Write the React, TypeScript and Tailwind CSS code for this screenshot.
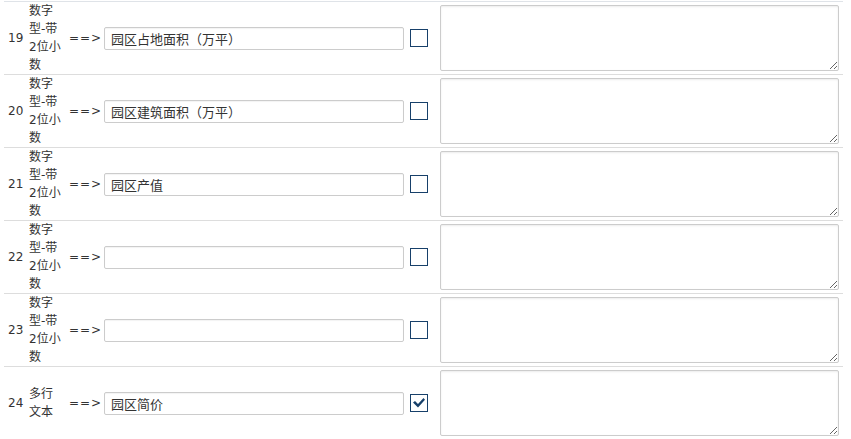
import React from "react";

type Field = {
  no: number;
  type: string;
  name: string;
  checked: boolean;
};

const fields: Field[] = [
  { no: 19, type: "数字型-带2位小数", name: "园区占地面积（万平）", checked: false },
  { no: 20, type: "数字型-带2位小数", name: "园区建筑面积（万平）", checked: false },
  { no: 21, type: "数字型-带2位小数", name: "园区产值", checked: false },
  { no: 22, type: "数字型-带2位小数", name: "", checked: false },
  { no: 23, type: "数字型-带2位小数", name: "", checked: false },
  { no: 24, type: "多行文本", name: "园区简价", checked: true },
];

function Check({ checked }: { checked: boolean }) {
  return (
    <span className="flex h-[18px] w-[18px] items-center justify-center border-[1.5px] border-[#17406a] bg-white">
      {checked && (
        <svg width="14" height="12" viewBox="0 0 14 12">
          <path d="M1 5.5 L3 4 L6 7 L11.5 1 L13 2.8 L6 10.5 Z" fill="#17406a" />
        </svg>
      )}
    </span>
  );
}

export default function App() {
  return (
    <div
      className="min-h-[439px] w-[851px] bg-white pt-px text-[#333]"
      style={{ fontFamily: '"DejaVu Sans", "Noto Sans CJK SC", sans-serif' }}
    >
      <div className="ml-[4px] w-[839px] border-t border-[#dfe3e8]">
        {fields.map((f) => (
          <div key={f.no} className="flex h-[73px] items-center border-b border-[#ddd]">
            <div className="w-[25px] pl-[4px] text-[12px]">{f.no}</div>
            <div className="w-[34px] text-[12px] leading-[18px] break-all">{f.type}</div>
            <div className="ml-[6px] w-[35px] text-[12px] tracking-[1px]">==&gt;</div>
            <input
              type="text"
              defaultValue={f.name}
              className="h-[23px] w-[300px] rounded-[2px] border border-[#ccc] px-[6px] text-[13px] text-[#333] shadow-[inset_0_1px_1px_rgba(0,0,0,0.05)] outline-none"
            />
            <div className="ml-[6px]">
              <Check checked={f.checked} />
            </div>
            <textarea className="ml-[12px] h-[66px] w-[399px] rounded-[2px] border border-[#ccc] shadow-[inset_0_1px_2px_rgba(0,0,0,0.08)] outline-none" />
          </div>
        ))}
      </div>
    </div>
  );
}
